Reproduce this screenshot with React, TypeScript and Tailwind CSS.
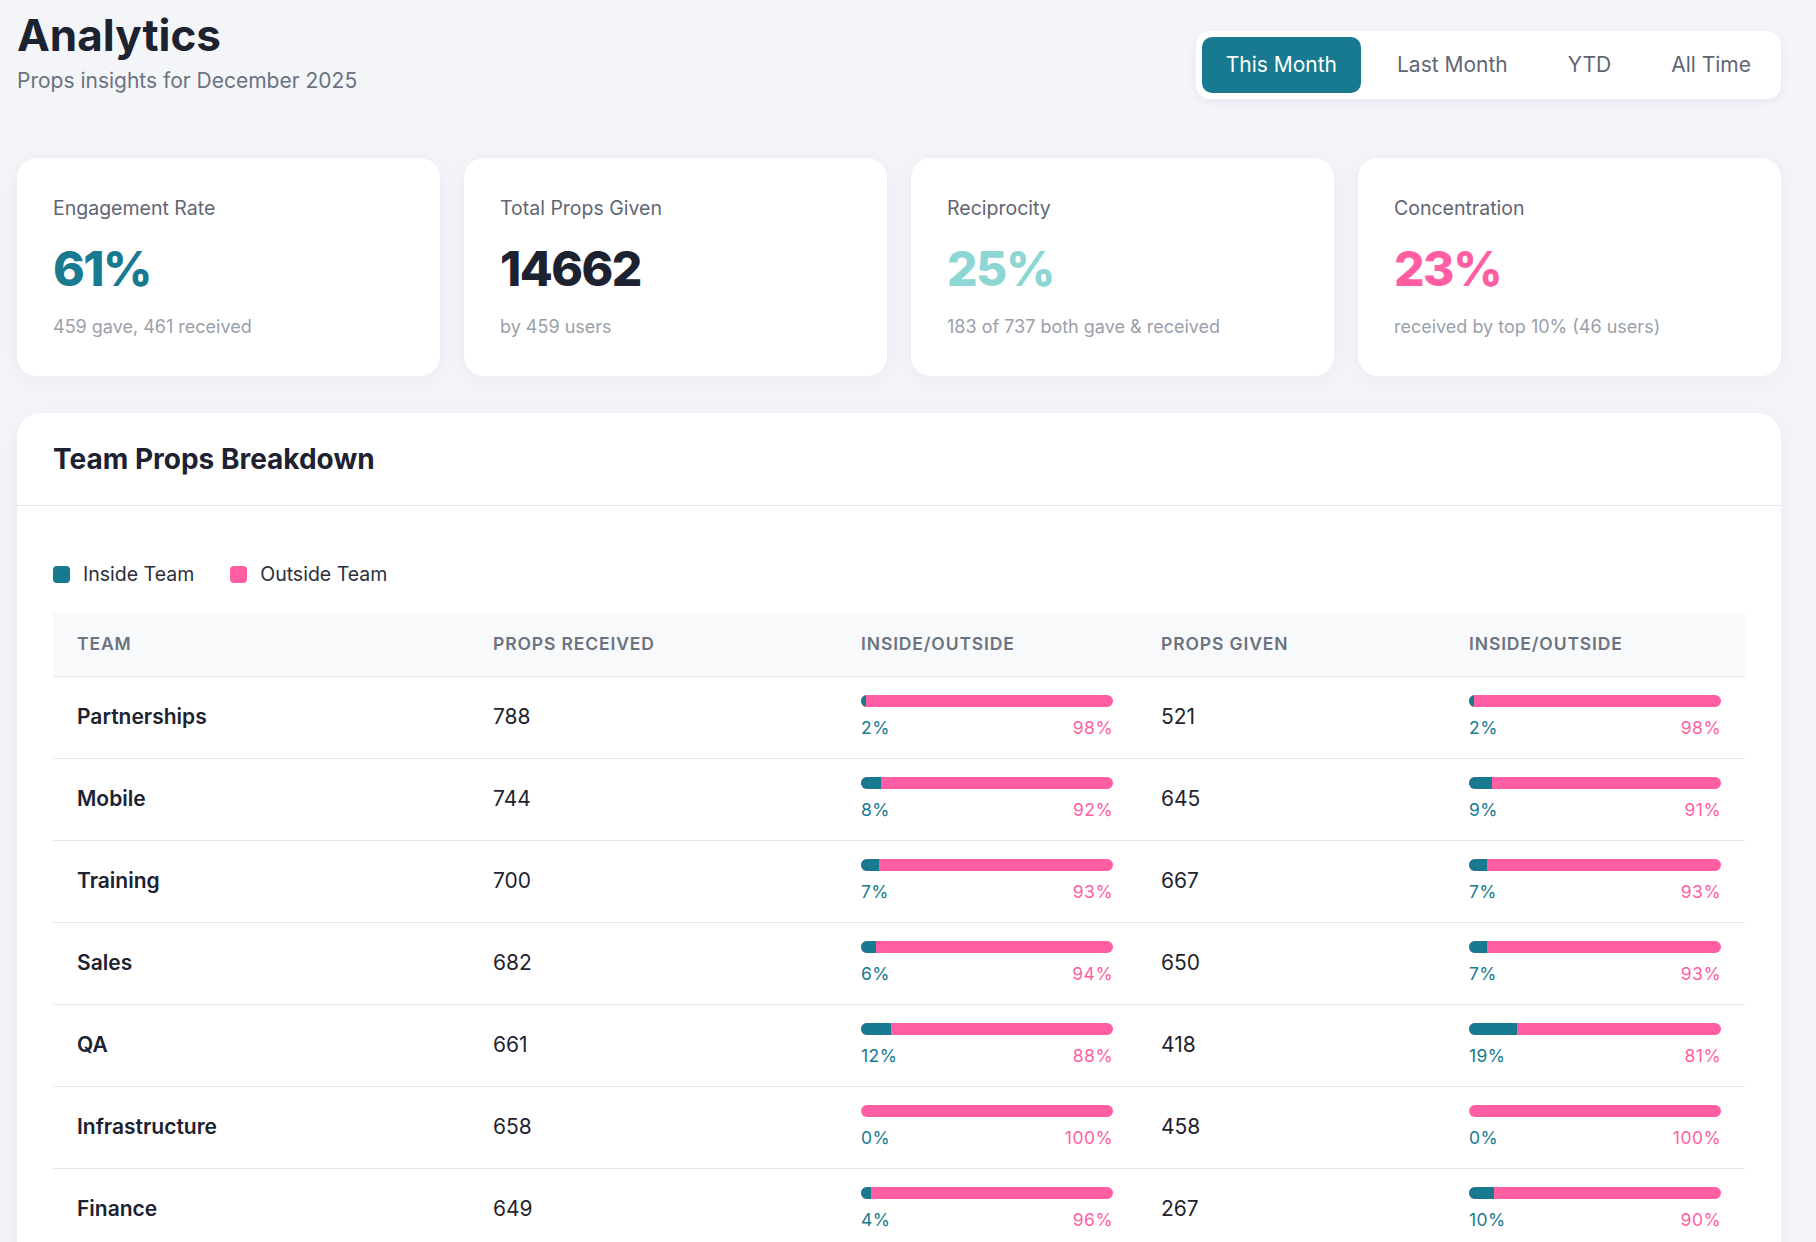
import React from 'react';

type Row = {
  team: string;
  received: number;
  recvIn: number;
  given: number;
  givenIn: number;
};

const rows: Row[] = [
  { team: 'Partnerships', received: 788, recvIn: 2, given: 521, givenIn: 2 },
  { team: 'Mobile', received: 744, recvIn: 8, given: 645, givenIn: 9 },
  { team: 'Training', received: 700, recvIn: 7, given: 667, givenIn: 7 },
  { team: 'Sales', received: 682, recvIn: 6, given: 650, givenIn: 7 },
  { team: 'QA', received: 661, recvIn: 12, given: 418, givenIn: 19 },
  { team: 'Infrastructure', received: 658, recvIn: 0, given: 458, givenIn: 0 },
  { team: 'Finance', received: 649, recvIn: 4, given: 267, givenIn: 10 },
];

const tabs = ['This Month', 'Last Month', 'YTD', 'All Time'];

const StatCard: React.FC<{ label: string; value: string; sub: string; valueClass: string }> = ({
  label,
  value,
  sub,
  valueClass,
}) => (
  <div className="bg-white rounded-[20px] p-9 shadow-[0_4px_24px_rgba(30,40,80,0.05)]">
    <div className="text-[19.5px] leading-7 text-[#5f6673]">{label}</div>
    <div className={`mt-[21px] text-[48px] leading-[52px] font-extrabold tracking-[-1.5px] ${valueClass}`}>{value}</div>
    <div className="mt-[19px] text-lg leading-[26px] text-[#9aa0ab]">{sub}</div>
  </div>
);

// stacked inside/outside bar with labels underneath
const SplitBar: React.FC<{ inside: number }> = ({ inside }) => (
  <div className="w-[252px]">
    <div className="h-3 w-full rounded-full bg-[#ff5fa2] overflow-hidden flex">
      <div className="h-full bg-[#187a90]" style={{ width: `${inside}%` }} />
    </div>
    <div className="mt-2 flex justify-between text-[17.5px] leading-[25px] tracking-wide">
      <span className="text-[#187a90]">{inside}%</span>
      <span className="text-[#ff5fa2]">{100 - inside}%</span>
    </div>
  </div>
);

export default function App() {
  return (
    <div className="min-h-screen bg-[#f4f5f9] font-['Inter',sans-serif] text-[#1f2430] pl-[17px] pr-[35px] pb-10">
      {/* Header */}
      <div className="flex items-start justify-between">
        <div className="pt-[9px]">
          <h1 className="text-[44px] leading-[52px] font-bold text-[#1c2230]">Analytics</h1>
          <p className="mt-[6px] text-[21px] leading-7 text-[#6b7280]">Props insights for December 2025</p>
        </div>
        <div className="mt-[31px] flex gap-[12px] bg-white rounded-[14px] p-1.5 shadow-[0_2px_12px_rgba(30,40,80,0.06)]">
          {tabs.map((t, i) => (
            <button
              key={t}
              className={
                i === 0
                  ? 'px-6 py-3.5 text-[21px] leading-7 rounded-[10px] bg-[#187a90] text-white'
                  : 'px-6 py-3.5 text-[21px] leading-7 rounded-[10px] text-[#5f6673]'
              }
            >
              {t}
            </button>
          ))}
        </div>
      </div>

      {/* Stat cards */}
      <div className="mt-[59px] grid grid-cols-4 gap-6">
        <StatCard label="Engagement Rate" value="61%" sub="459 gave, 461 received" valueClass="text-[#187a90]" />
        <StatCard label="Total Props Given" value="14662" sub="by 459 users" valueClass="text-[#1c2230]" />
        <StatCard label="Reciprocity" value="25%" sub="183 of 737 both gave & received" valueClass="text-[#8dd6d3]" />
        <StatCard label="Concentration" value="23%" sub="received by top 10% (46 users)" valueClass="text-[#ff5fa2]" />
      </div>

      {/* Team breakdown */}
      <div className="mt-[37px] bg-white rounded-3xl shadow-[0_4px_24px_rgba(30,40,80,0.05)]">
        <div className="px-9 h-[93px] flex items-center border-b border-[#e5e7eb]">
          <h2 className="text-[28px] font-bold text-[#1c2230]">Team Props Breakdown</h2>
        </div>
        <div className="px-9 pt-[54px] pb-9">
          <div className="flex items-center gap-9 text-[19.5px] leading-7 text-[#2b303b]">
            <div className="flex items-center gap-[13px]">
              <span className="w-[17px] h-[17px] rounded-[4px] bg-[#187a90]" />
              Inside Team
            </div>
            <div className="flex items-center gap-[13px]">
              <span className="w-[17px] h-[17px] rounded-[4px] bg-[#ff5fa2]" />
              Outside Team
            </div>
          </div>

          <table className="mt-[25px] w-full table-fixed border-collapse">
            <thead>
              <tr className="bg-[#f8f9fb] border-b border-[#e5e7eb] text-left text-[17.5px] font-semibold tracking-wider text-[#6b7280]">
                <th className="w-[416px] px-6 h-[63px] font-semibold">TEAM</th>
                <th className="w-[368px] px-6 font-semibold">PROPS RECEIVED</th>
                <th className="w-[300px] px-6 font-semibold">INSIDE/OUTSIDE</th>
                <th className="w-[308px] px-6 font-semibold">PROPS GIVEN</th>
                <th className="px-6 font-semibold">INSIDE/OUTSIDE</th>
              </tr>
            </thead>
            <tbody>
              {rows.map((r) => (
                <tr key={r.team} className="border-b border-[#e5e7eb] text-[21px]">
                  <td className="px-6 py-[18px] font-semibold text-[#1c2230]">{r.team}</td>
                  <td className="px-6 py-[18px] text-[#1f2430]">{r.received}</td>
                  <td className="px-6 py-[18px]">
                    <SplitBar inside={r.recvIn} />
                  </td>
                  <td className="px-6 py-[18px] text-[#1f2430]">{r.given}</td>
                  <td className="px-6 py-[18px]">
                    <SplitBar inside={r.givenIn} />
                  </td>
                </tr>
              ))}
            </tbody>
          </table>
        </div>
      </div>
    </div>
  );
}
